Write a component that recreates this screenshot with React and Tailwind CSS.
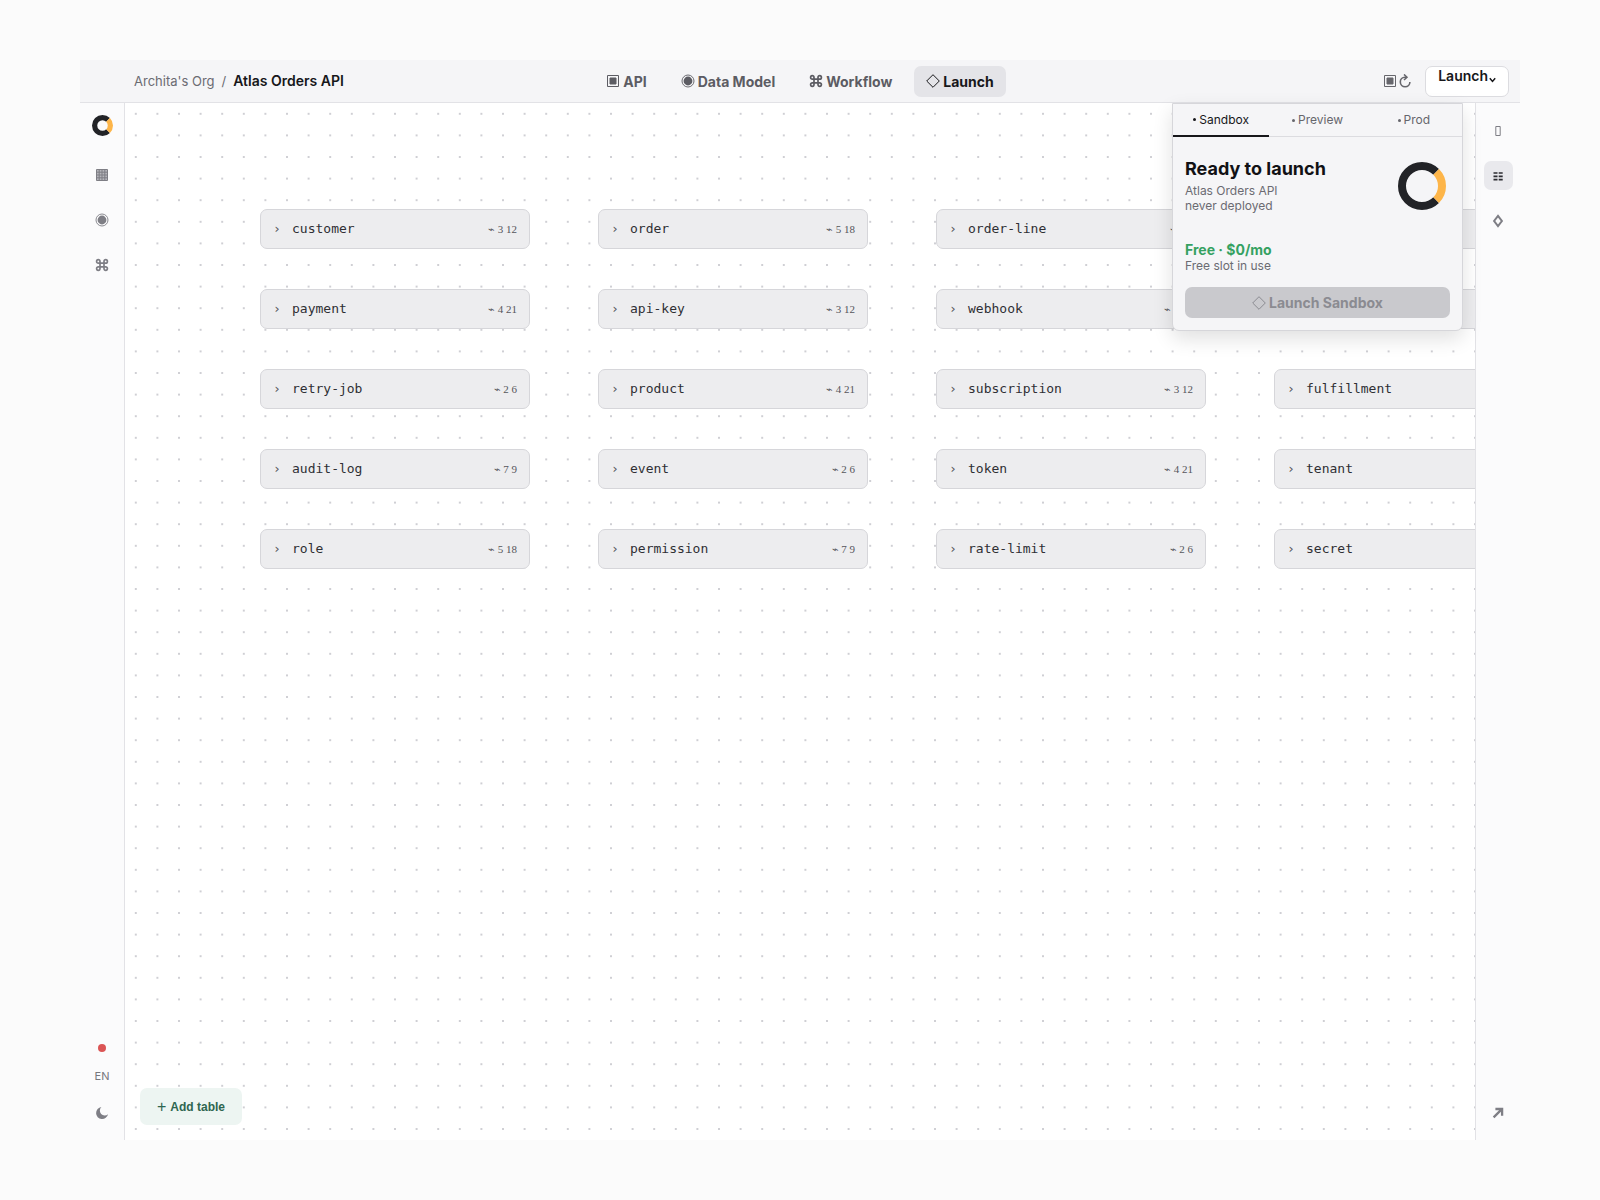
const TABLES = [
  ["customer", "3 12"], ["order", "5 18"], ["order-line", "7 9"], ["invoice", "2 6"],
  ["payment", "4 21"], ["api-key", "3 12"], ["webhook", "5 18"], ["delivery", "7 9"],
  ["retry-job", "2 6"], ["product", "4 21"], ["subscription", "3 12"], ["fulfillment", "5 18"],
  ["audit-log", "7 9"], ["event", "2 6"], ["token", "4 21"], ["tenant", "3 12"],
  ["role", "5 18"], ["permission", "7 9"], ["rate-limit", "2 6"], ["secret", "4 21"],
];

/* Icons share a 14-unit square, drawn at one unit per pixel. */
function Icon({ children, className = "" }) {
  return (
    <svg viewBox="0 0 14 14" fill="none" stroke="currentColor" className={`size-[14px] shrink-0 ${className}`} aria-hidden="true">
      {children}
    </svg>
  );
}

const SquareIcon = () => (
  <Icon>
    <path d="M1.5 1.5h11v11h-11z" />
    <path d="M4 4h6v6H4z" fill="currentColor" />
  </Icon>
);
const TargetIcon = () => (
  <Icon>
    <circle cx="7" cy="7" r="6" strokeWidth="0.9" />
    <circle cx="7" cy="7" r="4.4" fill="currentColor" stroke="none" />
  </Icon>
);
const CommandIcon = () => (
  <Icon>
    <path
      strokeWidth="1.7"
      d="M5 3.4v7.2A1.7 1.7 0 1 1 3.3 8.9h7.4A1.7 1.7 0 1 1 9 10.6V3.4a1.7 1.7 0 1 1 1.7 1.7H3.3A1.7 1.7 0 1 1 5 3.4z"
    />
  </Icon>
);
const DiamondIcon = () => (
  <Icon>
    <path d="M7 .7 13.3 7 7 13.3.7 7z" />
  </Icon>
);
const GridIcon = () => (
  <Icon>
    <path d="M1.5 1.5h11v11h-11zM4.2 1v12M7 1v12M9.8 1v12M1 4.2h12M1 7h12M1 9.8h12" fill="currentColor" fillOpacity="0.55" />
  </Icon>
);
const MoonIcon = () => (
  <Icon>
    <path d="M6.4 1.1A6 6 0 1 0 13 8.2 4.6 4.6 0 0 1 6.4 1.1z" fill="currentColor" stroke="none" />
  </Icon>
);
const RefreshIcon = () => (
  <Icon>
    <path d="M8 3.2H7a4.8 4.8 0 1 0 4.9 4.8" strokeWidth="1.6" />
    <path d="M6 .4 9 3.2 6 6" strokeWidth="1.5" />
  </Icon>
);
const PhoneIcon = () => (
  <Icon>
    <path d="M4.8 2.5h4.4v9H4.800z" />
  </Icon>
);
const RowsIcon = () => (
  <Icon>
    <path d="M2.5 4h4M7.7 4h4M2.5 7.3h4M7.7 7.3h4M2.5 10.6h4M7.7 10.6h4" strokeWidth="1.7" />
  </Icon>
);
const LozengeIcon = () => (
  <Icon>
    <path d="M7 1.8 10.9 7 7 12.2 3.1 7z" strokeWidth="2" />
  </Icon>
);
const ArrowIcon = () => (
  <Icon>
    <path d="M2.6 11.4 10.600 3.400M4.400 3h6.700v6.700" strokeWidth="2.300" />
  </Icon>
);

const NAV = [
  [SquareIcon, "API"],
  [TargetIcon, "Data Model"],
  [CommandIcon, "Workflow"],
  [DiamondIcon, "Launch"],
];

function Logo({ className, stroke }) {
  const r = 24 - stroke / 2;
  const d = r * Math.SQRT1_2;
  return (
    <svg viewBox="0 0 48 48" fill="none" strokeWidth={stroke} className={className} aria-hidden="true">
      <path d={`M${24 + d} ${24 - d}A${r} ${r} 0 1 0 ${24 + d} ${24 + d}`} stroke="#222327" />
      <path d={`M${24 + d} ${24 - d}A${r} ${r} 0 0 1 ${24 + d} ${24 + d}`} stroke="#fdb549" />
    </svg>
  );
}

function RailButton({ label, active, children }) {
  return (
    <button
      type="button"
      aria-label={label}
      className={`flex size-[29px] items-center justify-center rounded-[7px] ${
        active ? "bg-[#e9e9ed] text-[#2c2c32]" : "text-[#7e7e85]"
      }`}
    >
      {children}
    </button>
  );
}

function TopBar() {
  return (
    <header className="grid h-[43px] shrink-0 grid-cols-[1fr_auto_1fr] items-center border-b border-[#e2e2e6] bg-[#f5f5f7]">
      <div className="flex items-baseline gap-[7px] pl-[54px] text-[13px] text-[#6b6b72]">
        <a href="#org">Archita's Org</a>
        <span>/</span>
        <a href="#project" className="text-[14px] font-semibold text-[#17171a]">Atlas Orders API</a>
      </div>
      <nav className="flex items-center gap-[10px]">
        {NAV.map(([Glyph, label]) => (
          <button
            key={label}
            type="button"
            className={`flex h-[31px] items-center gap-[3px] rounded-[7px] px-3 text-[14px] font-bold whitespace-nowrap ${
              label === "Launch" ? "bg-[#e4e4e8] text-[#17171a]" : "text-[#5c5c63]"
            }`}
          >
            <Glyph />
            {label}
          </button>
        ))}
      </nav>
      <div className="flex items-center justify-end gap-[13px] pr-[11px]">
        <div className="flex gap-px text-[#66666c]">
          <button type="button" aria-label="Environment"><SquareIcon /></button>
          <button type="button" aria-label="Refresh"><RefreshIcon /></button>
        </div>
        <button
          type="button"
          className="flex h-[31px] items-start gap-px rounded-[7px] border border-[#dcdce0] bg-white px-3 text-[14px] leading-[18px] font-semibold text-[#17171a]"
        >
          Launch
          <svg viewBox="0 0 7 14" fill="none" stroke="currentColor" strokeWidth="1.5" className="mt-[5px] h-[14px] w-[7px]" aria-hidden="true">
            <path d="M.8 6.2 3.5 9.4 6.2 6.2" />
          </svg>
        </button>
      </div>
    </header>
  );
}

function TableCard({ name, counts }) {
  return (
    <button
      type="button"
      className="flex h-10 items-center rounded-[7px] border border-[#d6d6da] bg-[#ededef] px-3 text-left"
    >
      <span className="w-[19px] font-['DejaVu_Sans_Mono',monospace] text-[13px] text-[#55555b]">›</span>
      <span className="flex-1 font-['DejaVu_Sans_Mono',monospace] text-[13px] text-[#2f2f34]">{name}</span>
      <span className="font-['Liberation_Serif',serif] text-[11px] text-[#55555b]">⌁ {counts}</span>
    </button>
  );
}

function Bullet() {
  return <span className="size-[3px] rounded-full bg-current" />;
}

function LaunchPanel() {
  return (
    <section className="absolute top-0 right-3 w-[291px] rounded-b-[7px] border border-[#d6d6da] bg-[#f5f5f7] shadow-[0_8px_20px_rgba(0,0,0,0.12)]">
      <div role="tablist" className="grid grid-cols-3 border-b border-[#dcdce0] text-[12px] text-[#66666c]">
        <button
          type="button"
          role="tab"
          aria-selected="true"
          className="-mb-px flex h-[33px] items-center justify-center gap-[3px] border-b-2 border-[#17171a] text-[#17171a]"
        >
          <Bullet /> Sandbox
        </button>
        <button type="button" role="tab" aria-selected="false" className="flex items-center justify-center gap-[3px]">
          <Bullet /> Preview
        </button>
        <button type="button" role="tab" aria-selected="false" className="flex items-center justify-center gap-[3px]">
          <Bullet /> Prod
        </button>
      </div>
      <div className="px-3 pt-[22px] pb-3">
        <div className="flex justify-between">
          <div className="text-[12px] leading-[15px] text-[#6b6b72]">
            <h2 className="mb-1 text-[18px] leading-5 font-bold text-[#111114]">Ready to launch</h2>
            <p>Atlas Orders API</p>
            <p>never deployed</p>
          </div>
          <Logo className="mt-[3px] mr-1 size-12" stroke={8} />
        </div>
        <p className="mt-7 text-[14px] leading-[17px] font-bold text-[#35a162]">Free · $0/mo</p>
        <p className="text-[12px] leading-[15px] text-[#6b6b72]">Free slot in use</p>
        <button
          type="button"
          disabled
          className="mt-[14px] flex h-[31px] w-full items-center justify-center gap-[3px] rounded-[7px] bg-[#c9c9cd] text-[14px] font-bold text-[#8b8b91]"
        >
          <DiamondIcon />
          Launch Sandbox
        </button>
      </div>
    </section>
  );
}

export default function App() {
  return (
    <div className="flex min-h-screen flex-col bg-[#fbfbfb] px-20 py-[60px] font-[Inter,sans-serif]">
      <div className="flex flex-1 flex-col">
        <TopBar />
        <div className="flex flex-1">
          <aside className="flex w-[45px] shrink-0 flex-col items-center border-r border-[#e2e2e6] bg-[#fbfbfc] pt-3 pb-[13px]">
            <Logo className="mb-6 size-[21px]" stroke={12} />
            <div className="flex flex-col gap-4">
              <RailButton label="Tables"><GridIcon /></RailButton>
              <RailButton label="Data model"><TargetIcon /></RailButton>
              <RailButton label="Workflow"><CommandIcon /></RailButton>
            </div>
            <div className="mt-auto flex flex-col items-center">
              <span className="size-2 rounded-full bg-[#db5555]" />
              <button type="button" className="mt-4 mb-[14px] text-[11px] leading-4 text-[#77777d]">EN</button>
              <RailButton label="Dark mode"><MoonIcon /></RailButton>
            </div>
          </aside>
          <div className="relative flex-1">
            <main className="absolute inset-0 overflow-hidden bg-white">
              <div
                aria-hidden="true"
                className="absolute top-0 left-0 h-[112%] w-[112%] origin-top-left scale-90 bg-[radial-gradient(circle,#cfcfd4_1px,transparent_1px)] bg-size-[24px_24px]"
              />
              <div className="relative grid w-max grid-cols-[repeat(4,270px)] gap-x-[68px] gap-y-10 pt-[106px] pl-[135px]">
                {TABLES.map(([name, counts]) => (
                  <TableCard key={name} name={name} counts={counts} />
                ))}
              </div>
              <button
                type="button"
                className="absolute bottom-[15px] left-[15px] flex h-[37px] items-center gap-1 rounded-[7px] bg-[#edf5f2] px-[17px] font-['Liberation_Sans',sans-serif] text-[12px] font-bold text-[#2f6650]"
              >
                <span className="text-[16px] leading-4 font-normal">+</span>
                Add table
              </button>
            </main>
            <LaunchPanel />
          </div>
          <aside className="flex w-[45px] shrink-0 flex-col items-center gap-4 border-l border-[#e2e2e6] bg-[#fbfbfc] pt-[13px] pb-[13px]">
            <RailButton label="Device"><PhoneIcon /></RailButton>
            <RailButton label="Properties" active><RowsIcon /></RailButton>
            <RailButton label="Deployments"><LozengeIcon /></RailButton>
            <div className="mt-auto">
              <RailButton label="Expand"><ArrowIcon /></RailButton>
            </div>
          </aside>
        </div>
      </div>
    </div>
  );
}
